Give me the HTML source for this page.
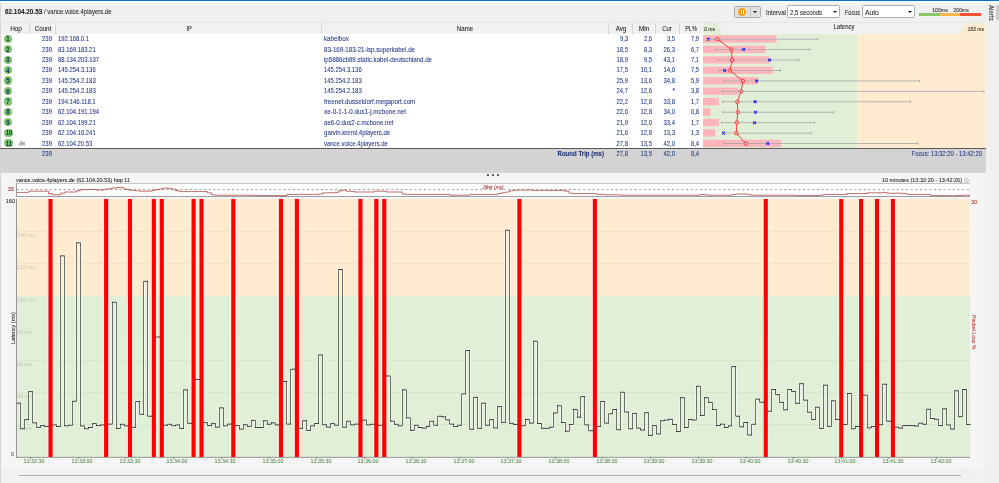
<!DOCTYPE html>
<html><head><meta charset="utf-8"><title>PingPlotter</title>
<style>
html,body{margin:0;padding:0;}
body{width:999px;height:483px;overflow:hidden;position:relative;background:#f0f0f0;font-family:"Liberation Sans",sans-serif;font-size:6px;color:#222;-webkit-text-size-adjust:none;text-size-adjust:none;}
div{position:absolute;white-space:nowrap;box-sizing:border-box;-webkit-text-stroke:0.07px currentColor;}
svg{position:absolute;left:0;top:0;}
.hop{left:3.6px;height:8.2px;border-radius:4.1px;background:#7cc468;}
.dd{background:#fff;border:0.6px solid #adadad;border-radius:1.6px;height:13px;top:5.4px;}
#all{left:0;top:0;width:999px;height:483px;will-change:transform;}
</style></head><body><div id="all">
<!-- window top -->
<div style="left:0;top:0;width:999px;height:1.4px;background:#0b6fd0"></div>
<div style="left:0;top:1.4px;width:999px;height:1.4px;background:#fafafa"></div>
<div style="left:0;top:3px;width:0.9px;height:480px;background:#d6d6d6"></div>
<!-- toolbar -->
<div style="top:7px;height:10.0px;line-height:10.0px;font-size:7.166px;color:#222;font-weight:bold;left:4.80px;transform-origin:0 50%;transform:translateY(0.15px) scaleX(0.8915);">62.104.20.53</div>
<div style="top:7px;height:10.0px;line-height:10.0px;font-size:7.166px;color:#222;left:44.10px;transform-origin:0 50%;transform:translateY(0.15px) scaleX(0.8360);">/ vance.voice.4players.de</div>
<div style="left:733.6px;top:5.6px;width:27.8px;height:12.8px;background:#e1e1e1;border:0.6px solid #adadad;border-radius:1.6px"></div>
<div style="left:750.2px;top:6.2px;width:0.6px;height:11.6px;background:#c4c4c4"></div>
<div style="left:738.3px;top:8.2px;width:7.8px;height:7.8px;border-radius:50%;background:#f9a01b"></div>
<div style="left:740.7px;top:10.1px;width:1.1px;height:4px;background:#fff"></div>
<div style="left:742.6px;top:10.1px;width:1.1px;height:4px;background:#fff"></div>
<div style="left:753.40px;top:11.10px;width:0;height:0;border-left:2.2px solid transparent;border-right:2.2px solid transparent;border-top:2.4px solid #111"></div>
<div style="top:8px;height:10.0px;line-height:10.0px;font-size:6.890px;color:#222;left:766.00px;transform-origin:0 50%;transform:translateY(0.05px) scaleX(0.8807);">Interval</div>
<div class="dd" style="left:787.2px;width:53.2px"></div>
<div style="top:8px;height:10.0px;line-height:10.0px;font-size:6.890px;color:#222;left:789.80px;transform-origin:0 50%;transform:translateY(0.15px) scaleX(0.8639);">2,5 seconds</div>
<div style="left:833.40px;top:11.10px;width:0;height:0;border-left:2.2px solid transparent;border-right:2.2px solid transparent;border-top:2.4px solid #111"></div>
<div style="top:8px;height:10.0px;line-height:10.0px;font-size:6.890px;color:#222;left:845.10px;transform-origin:0 50%;transform:translateY(0.05px) scaleX(0.7995);">Focus</div>
<div class="dd" style="left:861.6px;width:53.2px"></div>
<div style="top:8px;height:10.0px;line-height:10.0px;font-size:6.890px;color:#222;left:864.60px;transform-origin:0 50%;transform:translateY(0.15px) scaleX(0.9790);">Auto</div>
<div style="left:908.30px;top:11.10px;width:0;height:0;border-left:2.2px solid transparent;border-right:2.2px solid transparent;border-top:2.4px solid #111"></div>
<div style="left:919px;top:12.9px;width:21px;height:3px;background:#8ac56c"></div>
<div style="left:940px;top:12.9px;width:20.4px;height:3px;background:#fbb748"></div>
<div style="left:960.4px;top:12.9px;width:20.6px;height:3px;background:#f4523c"></div>
<div style="top:4px;height:10.0px;line-height:10.0px;font-size:6.042px;color:#222;left:790.20px;width:300px;text-align:center;transform-origin:50% 50%;transform:translateY(0.95px) scaleX(0.8602);">100ms</div>
<div style="top:4px;height:10.0px;line-height:10.0px;font-size:6.042px;color:#222;left:810.80px;width:300px;text-align:center;transform-origin:50% 50%;transform:translateY(0.95px) scaleX(0.8602);">200ms</div>
<!-- alerts sidebar -->
<div style="left:985.5px;top:3px;width:13.5px;height:480px;background:#f0f0f0"></div>
<div style="left:995.5px;top:4.6px;width:3.5px;height:15.3px;background:#cdcdcd"></div>
<div style="left:995.1px;top:4.7px;transform-origin:0 0;transform:rotate(90deg) scaleX(.92);font-size:6.7px;line-height:8px;color:#333">Alerts</div>
<!-- header strip -->
<div style="left:0;top:21.6px;width:985.5px;height:1.6px;background:#e4e4e4"></div>
<div style="left:1.8px;top:23.2px;width:983.7px;height:10.4px;background:#f1f1f1"></div>
<div style="top:23px;height:10.0px;line-height:10.0px;font-size:6.614px;color:#222;left:-134.30px;width:300px;text-align:center;transform-origin:50% 50%;transform:translateY(0.75px) scaleX(0.9687);">Hop</div><div style="left:29.30px;top:23.2px;width:0.6px;height:10.4px;background:#d6d6d6"></div><div style="top:23px;height:10.0px;line-height:10.0px;font-size:6.614px;color:#222;left:-107.40px;width:300px;text-align:center;transform-origin:50% 50%;transform:translateY(0.75px) scaleX(0.9453);">Count</div><div style="left:55.30px;top:23.2px;width:0.6px;height:10.4px;background:#d6d6d6"></div><div style="top:23px;height:10.0px;line-height:10.0px;font-size:6.614px;color:#222;left:38.55px;width:300px;text-align:center;transform-origin:50% 50%;transform:translateY(0.75px) scaleX(0.8337);">IP</div><div style="left:321.20px;top:23.2px;width:0.6px;height:10.4px;background:#d6d6d6"></div><div style="top:23px;height:10.0px;line-height:10.0px;font-size:6.614px;color:#222;left:315.10px;width:300px;text-align:center;transform-origin:50% 50%;transform:translateY(0.75px) scaleX(0.9337);">Name</div><div style="left:608.40px;top:23.2px;width:0.6px;height:10.4px;background:#d6d6d6"></div><div style="top:23px;height:10.0px;line-height:10.0px;font-size:6.614px;color:#222;left:470.55px;width:300px;text-align:center;transform-origin:50% 50%;transform:translateY(0.75px) scaleX(0.9477);">Avg</div><div style="left:632.10px;top:23.2px;width:0.6px;height:10.4px;background:#d6d6d6"></div><div style="top:23px;height:10.0px;line-height:10.0px;font-size:6.614px;color:#222;left:494.00px;width:300px;text-align:center;transform-origin:50% 50%;transform:translateY(0.75px) scaleX(0.9982);">Min</div><div style="left:655.30px;top:23.2px;width:0.6px;height:10.4px;background:#d6d6d6"></div><div style="top:23px;height:10.0px;line-height:10.0px;font-size:6.614px;color:#222;left:517.40px;width:300px;text-align:center;transform-origin:50% 50%;transform:translateY(0.75px) scaleX(0.8970);">Cur</div><div style="left:678.90px;top:23.2px;width:0.6px;height:10.4px;background:#d6d6d6"></div><div style="top:23px;height:10.0px;line-height:10.0px;font-size:6.614px;color:#222;left:541.10px;width:300px;text-align:center;transform-origin:50% 50%;transform:translateY(0.75px) scaleX(0.8295);">PL%</div><div style="top:22px;height:10.0px;line-height:10.0px;font-size:6.614px;color:#222;left:694.30px;width:300px;text-align:center;transform-origin:50% 50%;transform:translateY(0.25px) scaleX(0.9023);">Latency</div>
<!-- table body -->
<div style="left:1.8px;top:33.6px;width:701.2px;height:114.6px;background:#fff"></div>
<div class="hop" style="top:34.70px;width:8.2px"></div><div style="top:34px;height:10.0px;line-height:10.0px;font-size:6.678px;color:#17345c;font-weight:bold;left:-142.30px;width:300px;text-align:center;transform-origin:50% 50%;transform:translateY(0.35px) scaleX(0.8885);">1</div><div style="top:34px;height:10.0px;line-height:10.0px;font-size:6.614px;color:#24388a;left:-248.00px;width:300px;text-align:right;transform-origin:100% 50%;transform:translateY(0.15px) scaleX(0.9144);">239</div><div style="top:34px;height:10.0px;line-height:10.0px;font-size:6.614px;color:#24388a;left:58.00px;transform-origin:0 50%;transform:translateY(0.15px) scaleX(0.8863);">192.168.0.1</div><div style="top:34px;height:10.0px;line-height:10.0px;font-size:6.614px;color:#24388a;left:324.20px;transform-origin:0 50%;transform:translateY(0.15px) scaleX(0.9407);">kabelbox</div><div style="top:34px;height:10.0px;line-height:10.0px;font-size:6.614px;color:#24388a;left:328.40px;width:300px;text-align:right;transform-origin:100% 50%;transform:translateY(0.15px) scaleX(0.8788);">9,3</div><div style="top:34px;height:10.0px;line-height:10.0px;font-size:6.614px;color:#24388a;left:351.90px;width:300px;text-align:right;transform-origin:100% 50%;transform:translateY(0.15px) scaleX(0.8788);">2,6</div><div style="top:34px;height:10.0px;line-height:10.0px;font-size:6.614px;color:#24388a;left:375.00px;width:300px;text-align:right;transform-origin:100% 50%;transform:translateY(0.15px) scaleX(0.8788);">3,5</div><div style="top:34px;height:10.0px;line-height:10.0px;font-size:6.614px;color:#24388a;left:398.50px;width:300px;text-align:right;transform-origin:100% 50%;transform:translateY(0.15px) scaleX(0.8788);">7,9</div><div class="hop" style="top:45.14px;width:8.2px"></div><div style="top:44px;height:10.0px;line-height:10.0px;font-size:6.678px;color:#17345c;font-weight:bold;left:-142.30px;width:300px;text-align:center;transform-origin:50% 50%;transform:translateY(0.79px) scaleX(0.8885);">2</div><div style="top:44px;height:10.0px;line-height:10.0px;font-size:6.614px;color:#24388a;left:-248.00px;width:300px;text-align:right;transform-origin:100% 50%;transform:translateY(0.59px) scaleX(0.9144);">239</div><div style="top:44px;height:10.0px;line-height:10.0px;font-size:6.614px;color:#24388a;left:58.00px;transform-origin:0 50%;transform:translateY(0.59px) scaleX(0.8912);">83.169.183.21</div><div style="top:44px;height:10.0px;line-height:10.0px;font-size:6.614px;color:#24388a;left:324.20px;transform-origin:0 50%;transform:translateY(0.59px) scaleX(0.9347);">83-169-183-21-isp.superkabel.de</div><div style="top:44px;height:10.0px;line-height:10.0px;font-size:6.614px;color:#24388a;left:328.40px;width:300px;text-align:right;transform-origin:100% 50%;transform:translateY(0.59px) scaleX(0.8889);">18,5</div><div style="top:44px;height:10.0px;line-height:10.0px;font-size:6.614px;color:#24388a;left:351.90px;width:300px;text-align:right;transform-origin:100% 50%;transform:translateY(0.59px) scaleX(0.8788);">8,3</div><div style="top:44px;height:10.0px;line-height:10.0px;font-size:6.614px;color:#24388a;left:375.00px;width:300px;text-align:right;transform-origin:100% 50%;transform:translateY(0.59px) scaleX(0.8889);">26,3</div><div style="top:44px;height:10.0px;line-height:10.0px;font-size:6.614px;color:#24388a;left:398.50px;width:300px;text-align:right;transform-origin:100% 50%;transform:translateY(0.59px) scaleX(0.8788);">6,7</div><div class="hop" style="top:55.58px;width:8.2px"></div><div style="top:55px;height:10.0px;line-height:10.0px;font-size:6.678px;color:#17345c;font-weight:bold;left:-142.30px;width:300px;text-align:center;transform-origin:50% 50%;transform:translateY(0.23px) scaleX(0.8885);">3</div><div style="top:55px;height:10.0px;line-height:10.0px;font-size:6.614px;color:#24388a;left:-248.00px;width:300px;text-align:right;transform-origin:100% 50%;transform:translateY(0.03px) scaleX(0.9144);">239</div><div style="top:55px;height:10.0px;line-height:10.0px;font-size:6.614px;color:#24388a;left:58.00px;transform-origin:0 50%;transform:translateY(0.03px) scaleX(0.8930);">88.134.203.137</div><div style="top:55px;height:10.0px;line-height:10.0px;font-size:6.614px;color:#24388a;left:324.20px;transform-origin:0 50%;transform:translateY(0.03px) scaleX(0.9302);">ip5886cb89.static.kabel-deutschland.de</div><div style="top:55px;height:10.0px;line-height:10.0px;font-size:6.614px;color:#24388a;left:328.40px;width:300px;text-align:right;transform-origin:100% 50%;transform:translateY(0.03px) scaleX(0.8889);">18,9</div><div style="top:55px;height:10.0px;line-height:10.0px;font-size:6.614px;color:#24388a;left:351.90px;width:300px;text-align:right;transform-origin:100% 50%;transform:translateY(0.03px) scaleX(0.8788);">9,5</div><div style="top:55px;height:10.0px;line-height:10.0px;font-size:6.614px;color:#24388a;left:375.00px;width:300px;text-align:right;transform-origin:100% 50%;transform:translateY(0.03px) scaleX(0.8889);">43,1</div><div style="top:55px;height:10.0px;line-height:10.0px;font-size:6.614px;color:#24388a;left:398.50px;width:300px;text-align:right;transform-origin:100% 50%;transform:translateY(0.03px) scaleX(0.8788);">7,1</div><div class="hop" style="top:66.02px;width:8.2px"></div><div style="top:65px;height:10.0px;line-height:10.0px;font-size:6.678px;color:#17345c;font-weight:bold;left:-142.30px;width:300px;text-align:center;transform-origin:50% 50%;transform:translateY(0.67px) scaleX(0.8885);">4</div><div style="top:65px;height:10.0px;line-height:10.0px;font-size:6.614px;color:#24388a;left:-248.00px;width:300px;text-align:right;transform-origin:100% 50%;transform:translateY(0.47px) scaleX(0.9144);">239</div><div style="top:65px;height:10.0px;line-height:10.0px;font-size:6.614px;color:#24388a;left:58.00px;transform-origin:0 50%;transform:translateY(0.47px) scaleX(0.8912);">145.254.3.136</div><div style="top:65px;height:10.0px;line-height:10.0px;font-size:6.614px;color:#24388a;left:324.20px;transform-origin:0 50%;transform:translateY(0.47px) scaleX(0.8912);">145.254.3.136</div><div style="top:65px;height:10.0px;line-height:10.0px;font-size:6.614px;color:#24388a;left:328.40px;width:300px;text-align:right;transform-origin:100% 50%;transform:translateY(0.47px) scaleX(0.8889);">17,5</div><div style="top:65px;height:10.0px;line-height:10.0px;font-size:6.614px;color:#24388a;left:351.90px;width:300px;text-align:right;transform-origin:100% 50%;transform:translateY(0.47px) scaleX(0.8889);">10,1</div><div style="top:65px;height:10.0px;line-height:10.0px;font-size:6.614px;color:#24388a;left:375.00px;width:300px;text-align:right;transform-origin:100% 50%;transform:translateY(0.47px) scaleX(0.8889);">14,0</div><div style="top:65px;height:10.0px;line-height:10.0px;font-size:6.614px;color:#24388a;left:398.50px;width:300px;text-align:right;transform-origin:100% 50%;transform:translateY(0.47px) scaleX(0.8788);">7,5</div><div class="hop" style="top:76.46px;width:8.2px"></div><div style="top:76px;height:10.0px;line-height:10.0px;font-size:6.678px;color:#17345c;font-weight:bold;left:-142.30px;width:300px;text-align:center;transform-origin:50% 50%;transform:translateY(0.11px) scaleX(0.8885);">5</div><div style="top:75px;height:10.0px;line-height:10.0px;font-size:6.614px;color:#24388a;left:-248.00px;width:300px;text-align:right;transform-origin:100% 50%;transform:translateY(0.91px) scaleX(0.9144);">239</div><div style="top:75px;height:10.0px;line-height:10.0px;font-size:6.614px;color:#24388a;left:58.00px;transform-origin:0 50%;transform:translateY(0.91px) scaleX(0.8912);">145.254.2.183</div><div style="top:75px;height:10.0px;line-height:10.0px;font-size:6.614px;color:#24388a;left:324.20px;transform-origin:0 50%;transform:translateY(0.91px) scaleX(0.8912);">145.254.2.183</div><div style="top:75px;height:10.0px;line-height:10.0px;font-size:6.614px;color:#24388a;left:328.40px;width:300px;text-align:right;transform-origin:100% 50%;transform:translateY(0.91px) scaleX(0.8889);">25,9</div><div style="top:75px;height:10.0px;line-height:10.0px;font-size:6.614px;color:#24388a;left:351.90px;width:300px;text-align:right;transform-origin:100% 50%;transform:translateY(0.91px) scaleX(0.8889);">13,6</div><div style="top:75px;height:10.0px;line-height:10.0px;font-size:6.614px;color:#24388a;left:375.00px;width:300px;text-align:right;transform-origin:100% 50%;transform:translateY(0.91px) scaleX(0.8889);">34,8</div><div style="top:75px;height:10.0px;line-height:10.0px;font-size:6.614px;color:#24388a;left:398.50px;width:300px;text-align:right;transform-origin:100% 50%;transform:translateY(0.91px) scaleX(0.8788);">5,9</div><div class="hop" style="top:86.90px;width:8.2px"></div><div style="top:86px;height:10.0px;line-height:10.0px;font-size:6.678px;color:#17345c;font-weight:bold;left:-142.30px;width:300px;text-align:center;transform-origin:50% 50%;transform:translateY(0.55px) scaleX(0.8885);">6</div><div style="top:86px;height:10.0px;line-height:10.0px;font-size:6.614px;color:#24388a;left:-248.00px;width:300px;text-align:right;transform-origin:100% 50%;transform:translateY(0.35px) scaleX(0.9144);">239</div><div style="top:86px;height:10.0px;line-height:10.0px;font-size:6.614px;color:#24388a;left:58.00px;transform-origin:0 50%;transform:translateY(0.35px) scaleX(0.8912);">145.254.2.183</div><div style="top:86px;height:10.0px;line-height:10.0px;font-size:6.614px;color:#24388a;left:324.20px;transform-origin:0 50%;transform:translateY(0.35px) scaleX(0.8912);">145.254.2.183</div><div style="top:86px;height:10.0px;line-height:10.0px;font-size:6.614px;color:#24388a;left:328.40px;width:300px;text-align:right;transform-origin:100% 50%;transform:translateY(0.35px) scaleX(0.8889);">24,7</div><div style="top:86px;height:10.0px;line-height:10.0px;font-size:6.614px;color:#24388a;left:351.90px;width:300px;text-align:right;transform-origin:100% 50%;transform:translateY(0.35px) scaleX(0.8889);">12,6</div><div style="top:86px;height:10.0px;line-height:10.0px;font-size:6.614px;color:#24388a;left:375.00px;width:300px;text-align:right;transform-origin:100% 50%;transform:translateY(0.35px) scaleX(1.0109);">*</div><div style="top:86px;height:10.0px;line-height:10.0px;font-size:6.614px;color:#24388a;left:398.50px;width:300px;text-align:right;transform-origin:100% 50%;transform:translateY(0.35px) scaleX(0.8788);">3,8</div><div class="hop" style="top:97.34px;width:8.2px"></div><div style="top:96px;height:10.0px;line-height:10.0px;font-size:6.678px;color:#17345c;font-weight:bold;left:-142.30px;width:300px;text-align:center;transform-origin:50% 50%;transform:translateY(0.99px) scaleX(0.8885);">7</div><div style="top:96px;height:10.0px;line-height:10.0px;font-size:6.614px;color:#24388a;left:-248.00px;width:300px;text-align:right;transform-origin:100% 50%;transform:translateY(0.79px) scaleX(0.9144);">239</div><div style="top:96px;height:10.0px;line-height:10.0px;font-size:6.614px;color:#24388a;left:58.00px;transform-origin:0 50%;transform:translateY(0.79px) scaleX(0.9016);">194.146.118.1</div><div style="top:96px;height:10.0px;line-height:10.0px;font-size:6.614px;color:#24388a;left:324.20px;transform-origin:0 50%;transform:translateY(0.79px) scaleX(0.9410);">freenet.dusseldorf.megaport.com</div><div style="top:96px;height:10.0px;line-height:10.0px;font-size:6.614px;color:#24388a;left:328.40px;width:300px;text-align:right;transform-origin:100% 50%;transform:translateY(0.79px) scaleX(0.8889);">22,2</div><div style="top:96px;height:10.0px;line-height:10.0px;font-size:6.614px;color:#24388a;left:351.90px;width:300px;text-align:right;transform-origin:100% 50%;transform:translateY(0.79px) scaleX(0.8889);">12,8</div><div style="top:96px;height:10.0px;line-height:10.0px;font-size:6.614px;color:#24388a;left:375.00px;width:300px;text-align:right;transform-origin:100% 50%;transform:translateY(0.79px) scaleX(0.8889);">33,8</div><div style="top:96px;height:10.0px;line-height:10.0px;font-size:6.614px;color:#24388a;left:398.50px;width:300px;text-align:right;transform-origin:100% 50%;transform:translateY(0.79px) scaleX(0.8788);">1,7</div><div class="hop" style="top:107.78px;width:8.2px"></div><div style="top:107px;height:10.0px;line-height:10.0px;font-size:6.678px;color:#17345c;font-weight:bold;left:-142.30px;width:300px;text-align:center;transform-origin:50% 50%;transform:translateY(0.43px) scaleX(0.8885);">8</div><div style="top:107px;height:10.0px;line-height:10.0px;font-size:6.614px;color:#24388a;left:-248.00px;width:300px;text-align:right;transform-origin:100% 50%;transform:translateY(0.23px) scaleX(0.9144);">239</div><div style="top:107px;height:10.0px;line-height:10.0px;font-size:6.614px;color:#24388a;left:58.00px;transform-origin:0 50%;transform:translateY(0.23px) scaleX(0.8930);">62.104.191.194</div><div style="top:107px;height:10.0px;line-height:10.0px;font-size:6.614px;color:#24388a;left:324.20px;transform-origin:0 50%;transform:translateY(0.23px) scaleX(0.9463);">xe-0-1-1-0.dus1-j.mcbone.net</div><div style="top:107px;height:10.0px;line-height:10.0px;font-size:6.614px;color:#24388a;left:328.40px;width:300px;text-align:right;transform-origin:100% 50%;transform:translateY(0.23px) scaleX(0.8889);">22,6</div><div style="top:107px;height:10.0px;line-height:10.0px;font-size:6.614px;color:#24388a;left:351.90px;width:300px;text-align:right;transform-origin:100% 50%;transform:translateY(0.23px) scaleX(0.8889);">12,8</div><div style="top:107px;height:10.0px;line-height:10.0px;font-size:6.614px;color:#24388a;left:375.00px;width:300px;text-align:right;transform-origin:100% 50%;transform:translateY(0.23px) scaleX(0.8889);">34,0</div><div style="top:107px;height:10.0px;line-height:10.0px;font-size:6.614px;color:#24388a;left:398.50px;width:300px;text-align:right;transform-origin:100% 50%;transform:translateY(0.23px) scaleX(0.8788);">0,8</div><div class="hop" style="top:118.22px;width:8.2px"></div><div style="top:117px;height:10.0px;line-height:10.0px;font-size:6.678px;color:#17345c;font-weight:bold;left:-142.30px;width:300px;text-align:center;transform-origin:50% 50%;transform:translateY(0.87px) scaleX(0.8885);">9</div><div style="top:117px;height:10.0px;line-height:10.0px;font-size:6.614px;color:#24388a;left:-248.00px;width:300px;text-align:right;transform-origin:100% 50%;transform:translateY(0.67px) scaleX(0.9144);">239</div><div style="top:117px;height:10.0px;line-height:10.0px;font-size:6.614px;color:#24388a;left:58.00px;transform-origin:0 50%;transform:translateY(0.67px) scaleX(0.8912);">62.104.199.21</div><div style="top:117px;height:10.0px;line-height:10.0px;font-size:6.614px;color:#24388a;left:324.20px;transform-origin:0 50%;transform:translateY(0.67px) scaleX(0.9275);">ae6-0.dus2-c.mcbone.net</div><div style="top:117px;height:10.0px;line-height:10.0px;font-size:6.614px;color:#24388a;left:328.40px;width:300px;text-align:right;transform-origin:100% 50%;transform:translateY(0.67px) scaleX(0.8889);">21,9</div><div style="top:117px;height:10.0px;line-height:10.0px;font-size:6.614px;color:#24388a;left:351.90px;width:300px;text-align:right;transform-origin:100% 50%;transform:translateY(0.67px) scaleX(0.8889);">12,0</div><div style="top:117px;height:10.0px;line-height:10.0px;font-size:6.614px;color:#24388a;left:375.00px;width:300px;text-align:right;transform-origin:100% 50%;transform:translateY(0.67px) scaleX(0.8889);">33,4</div><div style="top:117px;height:10.0px;line-height:10.0px;font-size:6.614px;color:#24388a;left:398.50px;width:300px;text-align:right;transform-origin:100% 50%;transform:translateY(0.67px) scaleX(0.8788);">1,7</div><div class="hop" style="top:128.66px;width:9.9px"></div><div style="top:128px;height:10.0px;line-height:10.0px;font-size:6.678px;color:#17345c;font-weight:bold;left:-141.45px;width:300px;text-align:center;transform-origin:50% 50%;transform:translateY(0.31px) scaleX(0.8616);">10</div><div style="top:128px;height:10.0px;line-height:10.0px;font-size:6.614px;color:#24388a;left:-248.00px;width:300px;text-align:right;transform-origin:100% 50%;transform:translateY(0.11px) scaleX(0.9144);">239</div><div style="top:128px;height:10.0px;line-height:10.0px;font-size:6.614px;color:#24388a;left:58.00px;transform-origin:0 50%;transform:translateY(0.11px) scaleX(0.8912);">62.104.16.241</div><div style="top:128px;height:10.0px;line-height:10.0px;font-size:6.614px;color:#24388a;left:324.20px;transform-origin:0 50%;transform:translateY(0.11px) scaleX(0.9197);">garvin.kreml.4players.de</div><div style="top:128px;height:10.0px;line-height:10.0px;font-size:6.614px;color:#24388a;left:328.40px;width:300px;text-align:right;transform-origin:100% 50%;transform:translateY(0.11px) scaleX(0.8889);">21,6</div><div style="top:128px;height:10.0px;line-height:10.0px;font-size:6.614px;color:#24388a;left:351.90px;width:300px;text-align:right;transform-origin:100% 50%;transform:translateY(0.11px) scaleX(0.8889);">12,8</div><div style="top:128px;height:10.0px;line-height:10.0px;font-size:6.614px;color:#24388a;left:375.00px;width:300px;text-align:right;transform-origin:100% 50%;transform:translateY(0.11px) scaleX(0.8889);">13,3</div><div style="top:128px;height:10.0px;line-height:10.0px;font-size:6.614px;color:#24388a;left:398.50px;width:300px;text-align:right;transform-origin:100% 50%;transform:translateY(0.11px) scaleX(0.8788);">1,3</div><div class="hop" style="top:139.10px;width:9.9px"></div><div style="top:138px;height:10.0px;line-height:10.0px;font-size:6.678px;color:#17345c;font-weight:bold;left:-141.45px;width:300px;text-align:center;transform-origin:50% 50%;transform:translateY(0.75px) scaleX(0.9065);">11</div><div style="top:138px;height:10.0px;line-height:10.0px;font-size:6.614px;color:#24388a;left:-248.00px;width:300px;text-align:right;transform-origin:100% 50%;transform:translateY(0.55px) scaleX(0.9144);">239</div><div style="top:138px;height:10.0px;line-height:10.0px;font-size:6.614px;color:#24388a;left:58.00px;transform-origin:0 50%;transform:translateY(0.55px) scaleX(0.8889);">62.104.20.53</div><div style="top:138px;height:10.0px;line-height:10.0px;font-size:6.614px;color:#24388a;left:324.20px;transform-origin:0 50%;transform:translateY(0.55px) scaleX(0.9010);">vance.voice.4players.de</div><div style="top:138px;height:10.0px;line-height:10.0px;font-size:6.614px;color:#24388a;left:328.40px;width:300px;text-align:right;transform-origin:100% 50%;transform:translateY(0.55px) scaleX(0.8889);">27,8</div><div style="top:138px;height:10.0px;line-height:10.0px;font-size:6.614px;color:#24388a;left:351.90px;width:300px;text-align:right;transform-origin:100% 50%;transform:translateY(0.55px) scaleX(0.8889);">13,5</div><div style="top:138px;height:10.0px;line-height:10.0px;font-size:6.614px;color:#24388a;left:375.00px;width:300px;text-align:right;transform-origin:100% 50%;transform:translateY(0.55px) scaleX(0.8889);">42,0</div><div style="top:138px;height:10.0px;line-height:10.0px;font-size:6.614px;color:#24388a;left:398.50px;width:300px;text-align:right;transform-origin:100% 50%;transform:translateY(0.55px) scaleX(0.8788);">8,4</div>
<!-- latency area -->
<div style="left:703px;top:33.6px;width:154.4px;height:114.6px;background:#e0efd6"></div>
<div style="left:857.4px;top:33.6px;width:128.1px;height:114.6px;background:#ffebd0"></div>
<svg width="999" height="483" viewBox="0 0 999 483">
<polygon points="703,23.2 717.6,23.2 723,33.7 703,33.7" fill="#e0efd6"/>
<polygon points="966,23.2 985.5,23.2 985.5,33.7 959,33.7" fill="#ffebd0"/>
<rect x="703.0" y="35.35" width="73.47" height="7.3" fill="#ffb4bc"/><path d="M707.01,39.15H818.00M707.01,37.80v2.7M818.00,37.80v2.7" stroke="#fff" stroke-width="1.7" fill="none" opacity="0.35"/><path d="M707.01,39.15H818.00M707.01,37.80v2.7M818.00,37.80v2.7" stroke="#858585" stroke-width="0.62" fill="none"/><path d="M707.00,37.75l2.8,2.8M707.00,40.55l2.8,-2.8" stroke="#2020f0" stroke-width="1.05" fill="none"/><rect x="703.0" y="45.79" width="62.31" height="7.3" fill="#ffb4bc"/><path d="M715.81,49.59H810.00M715.81,48.24v2.7M810.00,48.24v2.7" stroke="#fff" stroke-width="1.7" fill="none" opacity="0.35"/><path d="M715.81,49.59H810.00M715.81,48.24v2.7M810.00,48.24v2.7" stroke="#858585" stroke-width="0.62" fill="none"/><path d="M742.20,48.19l2.8,2.8M742.20,50.99l2.8,-2.8" stroke="#2020f0" stroke-width="1.05" fill="none"/><rect x="703.0" y="56.23" width="66.03" height="7.3" fill="#ffb4bc"/><path d="M717.67,60.03H799.00M717.67,58.68v2.7M799.00,58.68v2.7" stroke="#fff" stroke-width="1.7" fill="none" opacity="0.35"/><path d="M717.67,60.03H799.00M717.67,58.68v2.7M799.00,58.68v2.7" stroke="#858585" stroke-width="0.62" fill="none"/><path d="M768.13,58.63l2.8,2.8M768.13,61.43l2.8,-2.8" stroke="#2020f0" stroke-width="1.05" fill="none"/><rect x="703.0" y="66.67" width="69.75" height="7.3" fill="#ffb4bc"/><path d="M718.59,70.47H780.50M718.59,69.12v2.7M780.50,69.12v2.7" stroke="#fff" stroke-width="1.7" fill="none" opacity="0.35"/><path d="M718.59,70.47H780.50M718.59,69.12v2.7M780.50,69.12v2.7" stroke="#858585" stroke-width="0.62" fill="none"/><path d="M723.21,69.07l2.8,2.8M723.21,71.87l2.8,-2.8" stroke="#2020f0" stroke-width="1.05" fill="none"/><rect x="703.0" y="77.11" width="54.87" height="7.3" fill="#ffb4bc"/><path d="M723.99,80.91H919.50M723.99,79.56v2.7M919.50,79.56v2.7" stroke="#fff" stroke-width="1.7" fill="none" opacity="0.35"/><path d="M723.99,80.91H919.50M723.99,79.56v2.7M919.50,79.56v2.7" stroke="#858585" stroke-width="0.62" fill="none"/><path d="M755.32,79.51l2.8,2.8M755.32,82.31l2.8,-2.8" stroke="#2020f0" stroke-width="1.05" fill="none"/><rect x="703.0" y="87.55" width="35.34" height="7.3" fill="#ffb4bc"/><path d="M722.45,91.35H984.00M722.45,90.00v2.7M984.00,90.00v2.7" stroke="#fff" stroke-width="1.7" fill="none" opacity="0.35"/><path d="M722.45,91.35H984.00M722.45,90.00v2.7M984.00,90.00v2.7" stroke="#858585" stroke-width="0.62" fill="none"/><rect x="703.0" y="97.99" width="15.81" height="7.3" fill="#ffb4bc"/><path d="M722.76,101.79H910.40M722.76,100.44v2.7M910.40,100.44v2.7" stroke="#fff" stroke-width="1.7" fill="none" opacity="0.35"/><path d="M722.76,101.79H910.40M722.76,100.44v2.7M910.40,100.44v2.7" stroke="#858585" stroke-width="0.62" fill="none"/><path d="M753.78,100.39l2.8,2.8M753.78,103.19l2.8,-2.8" stroke="#2020f0" stroke-width="1.05" fill="none"/><rect x="703.0" y="108.43" width="7.44" height="7.3" fill="#ffb4bc"/><path d="M722.76,112.23H833.60M722.76,110.88v2.7M833.60,110.88v2.7" stroke="#fff" stroke-width="1.7" fill="none" opacity="0.35"/><path d="M722.76,112.23H833.60M722.76,110.88v2.7M833.60,110.88v2.7" stroke="#858585" stroke-width="0.62" fill="none"/><path d="M754.09,110.83l2.8,2.8M754.09,113.63l2.8,-2.8" stroke="#2020f0" stroke-width="1.05" fill="none"/><rect x="703.0" y="118.87" width="15.81" height="7.3" fill="#ffb4bc"/><path d="M721.52,122.67H814.50M721.52,121.32v2.7M814.50,121.32v2.7" stroke="#fff" stroke-width="1.7" fill="none" opacity="0.35"/><path d="M721.52,122.67H814.50M721.52,121.32v2.7M814.50,121.32v2.7" stroke="#858585" stroke-width="0.62" fill="none"/><path d="M753.16,121.27l2.8,2.8M753.16,124.07l2.8,-2.8" stroke="#2020f0" stroke-width="1.05" fill="none"/><rect x="703.0" y="129.31" width="12.09" height="7.3" fill="#ffb4bc"/><path d="M722.76,133.11H811.00M722.76,131.76v2.7M811.00,131.76v2.7" stroke="#fff" stroke-width="1.7" fill="none" opacity="0.35"/><path d="M722.76,133.11H811.00M722.76,131.76v2.7M811.00,131.76v2.7" stroke="#858585" stroke-width="0.62" fill="none"/><path d="M722.13,131.71l2.8,2.8M722.13,134.51l2.8,-2.8" stroke="#2020f0" stroke-width="1.05" fill="none"/><rect x="703.0" y="139.75" width="78.12" height="7.3" fill="#ffb4bc"/><path d="M723.84,143.55H918.00M723.84,142.20v2.7M918.00,142.20v2.7" stroke="#fff" stroke-width="1.7" fill="none" opacity="0.35"/><path d="M723.84,143.55H918.00M723.84,142.20v2.7M918.00,142.20v2.7" stroke="#858585" stroke-width="0.62" fill="none"/><path d="M766.44,142.15l2.8,2.8M766.44,144.95l2.8,-2.8" stroke="#2020f0" stroke-width="1.05" fill="none"/><path d="M717.36,39.15 L731.56,49.59 L732.18,60.03 L730.01,70.47 L742.98,80.91 L741.13,91.35 L737.27,101.79 L737.89,112.23 L736.81,122.67 L736.34,133.11 L745.91,143.55" stroke="#f03030" stroke-width="0.9" fill="none"/><circle cx="717.36" cy="39.15" r="1.75" fill="#ffd0d0" fill-opacity="0.45" stroke="#f03030" stroke-width="0.85"/><circle cx="731.56" cy="49.59" r="1.75" fill="#ffd0d0" fill-opacity="0.45" stroke="#f03030" stroke-width="0.85"/><circle cx="732.18" cy="60.03" r="1.75" fill="#ffd0d0" fill-opacity="0.45" stroke="#f03030" stroke-width="0.85"/><circle cx="730.01" cy="70.47" r="1.75" fill="#ffd0d0" fill-opacity="0.45" stroke="#f03030" stroke-width="0.85"/><circle cx="742.98" cy="80.91" r="1.75" fill="#ffd0d0" fill-opacity="0.45" stroke="#f03030" stroke-width="0.85"/><circle cx="741.13" cy="91.35" r="1.75" fill="#ffd0d0" fill-opacity="0.45" stroke="#f03030" stroke-width="0.85"/><circle cx="737.27" cy="101.79" r="1.75" fill="#ffd0d0" fill-opacity="0.45" stroke="#f03030" stroke-width="0.85"/><circle cx="737.89" cy="112.23" r="1.75" fill="#ffd0d0" fill-opacity="0.45" stroke="#f03030" stroke-width="0.85"/><circle cx="736.81" cy="122.67" r="1.75" fill="#ffd0d0" fill-opacity="0.45" stroke="#f03030" stroke-width="0.85"/><circle cx="736.34" cy="133.11" r="1.75" fill="#ffd0d0" fill-opacity="0.45" stroke="#f03030" stroke-width="0.85"/><circle cx="745.91" cy="143.55" r="1.75" fill="#ffd0d0" fill-opacity="0.45" stroke="#f03030" stroke-width="0.85"/>
<g fill="#666"><rect x="18.8" y="143.1" width="0.8" height="2.4"/><rect x="20.7" y="140.7" width="0.8" height="4.8"/><rect x="22.4" y="141.9" width="0.8" height="3.6"/><rect x="23.7" y="142.3" width="0.8" height="3.2"/></g>
</svg>
<div style="top:23px;height:10.0px;line-height:10.0px;font-size:6.042px;color:#222;font-style:italic;left:704.40px;transform-origin:0 50%;transform:translateY(0.95px) scaleX(0.8401);">0 ms</div>
<div style="top:23px;height:10.0px;line-height:10.0px;font-size:6.042px;color:#222;font-style:italic;left:683.80px;width:300px;text-align:right;transform-origin:100% 50%;transform:translateY(0.95px) scaleX(0.8378);">183 ms</div>
<!-- summary band -->
<div style="left:0;top:148px;width:985.5px;height:0.8px;background:#5a5a5a"></div>
<div style="left:0;top:148.8px;width:985.5px;height:23.9px;background:#d3d3d3"></div>
<div style="top:148px;height:10.0px;line-height:10.0px;font-size:6.614px;color:#24388a;left:-248.00px;width:300px;text-align:right;transform-origin:100% 50%;transform:translateY(0.55px) scaleX(0.9144);">239</div>
<div style="top:148px;height:10.0px;line-height:10.0px;font-size:6.614px;color:#1d2f7a;font-weight:bold;left:304.00px;width:300px;text-align:right;transform-origin:100% 50%;transform:translateY(0.55px) scaleX(0.9170);">Round Trip (ms)</div>
<div style="top:148px;height:10.0px;line-height:10.0px;font-size:6.614px;color:#24388a;left:328.40px;width:300px;text-align:right;transform-origin:100% 50%;transform:translateY(0.55px) scaleX(0.8889);">27,8</div>
<div style="top:148px;height:10.0px;line-height:10.0px;font-size:6.614px;color:#24388a;left:351.90px;width:300px;text-align:right;transform-origin:100% 50%;transform:translateY(0.55px) scaleX(0.8889);">13,5</div>
<div style="top:148px;height:10.0px;line-height:10.0px;font-size:6.614px;color:#24388a;left:375.00px;width:300px;text-align:right;transform-origin:100% 50%;transform:translateY(0.55px) scaleX(0.8889);">42,0</div>
<div style="top:148px;height:10.0px;line-height:10.0px;font-size:6.614px;color:#24388a;left:398.50px;width:300px;text-align:right;transform-origin:100% 50%;transform:translateY(0.55px) scaleX(0.8788);">8,4</div>
<div style="top:148px;height:10.0px;line-height:10.0px;font-size:6.614px;color:#24388a;left:681.50px;width:300px;text-align:right;transform-origin:100% 50%;transform:translateY(0.55px) scaleX(0.8919);">Focus: 13:32:20 - 13:42:20</div>
<!-- graph panel -->
<div style="left:1.8px;top:172.7px;width:983.7px;height:310.3px;background:#f5f5f5"></div>
<div style="left:1.8px;top:468px;width:983.7px;height:15px;background:#f1f1f1"></div>
<div style="left:487px;top:174.1px;width:2px;height:2px;border-radius:0.6px;background:#555"></div>
<div style="left:491.9px;top:174.1px;width:2px;height:2px;border-radius:0.6px;background:#555"></div>
<div style="left:497px;top:174.1px;width:2px;height:2px;border-radius:0.6px;background:#555"></div>
<div style="left:16.2px;top:183.3px;width:953.8px;height:13.6px;background:#fff;border:0.6px solid #a0a0a0;border-top:0.8px solid #c4c4c4;border-right:none"></div>
<div style="top:175px;height:10.0px;line-height:10.0px;font-size:6.063px;color:#222;left:16.20px;transform-origin:0 50%;transform:translateY(0.05px) scaleX(0.9079);">vance.voice.4players.de (62.104.20.53) hop 11</div>
<div style="top:175px;height:10.0px;line-height:10.0px;font-size:6.063px;color:#222;left:662.00px;width:300px;text-align:right;transform-origin:100% 50%;transform:translateY(0.05px) scaleX(0.9123);">10 minutes (13:32:20 - 13:42:20)</div>
<div style="left:964.4px;top:178.2px;width:5px;height:5px;border-radius:50%;background:#e4e4e4;border:0.5px solid #c8c8c8"></div>
<div style="top:184px;height:10.0px;line-height:10.0px;font-size:6.063px;color:#b22222;left:-285.80px;width:300px;text-align:right;transform-origin:100% 50%;transform:translateY(0.15px) scaleX(0.9144);">35</div>
<div style="top:195px;height:10.0px;line-height:10.0px;font-size:6.063px;color:#222;left:-285.50px;width:300px;text-align:right;transform-origin:100% 50%;transform:translateY(0.75px) scaleX(0.9144);">160</div>
<div style="top:449px;height:10.0px;line-height:10.0px;font-size:6.063px;color:#555;left:-285.60px;width:300px;text-align:right;transform-origin:100% 50%;transform:translateY(0.25px) scaleX(0.9144);">0</div>
<div style="top:197px;height:10.0px;line-height:10.0px;font-size:6.063px;color:#c03030;left:971.00px;transform-origin:0 50%;transform:translateY(0.35px) scaleX(0.9144);">30</div>
<div style="left:16.5px;top:199.0px;width:953.5px;height:96.80px;background:#ffebd0"></div>
<div style="left:16.5px;top:295.80px;width:953.5px;height:161.20px;background:#e0efd6"></div>
<div style="top:230px;height:10.0px;line-height:10.0px;font-size:6.063px;color:#b4b4a4;left:17.20px;transform-origin:0 50%;transform:translateY(0.15px) scaleX(0.9136);opacity:.6;">140 ms</div><div style="top:262px;height:10.0px;line-height:10.0px;font-size:6.063px;color:#b4b4a4;left:17.20px;transform-origin:0 50%;transform:translateY(0.35px) scaleX(0.9136);opacity:.6;">120 ms</div><div style="top:294px;height:10.0px;line-height:10.0px;font-size:6.063px;color:#b4b4a4;left:17.20px;transform-origin:0 50%;transform:translateY(0.55px) scaleX(0.9136);opacity:.6;">100 ms</div><div style="top:326px;height:10.0px;line-height:10.0px;font-size:6.063px;color:#b4b4a4;left:17.20px;transform-origin:0 50%;transform:translateY(0.75px) scaleX(0.9134);opacity:.6;">80 ms</div><div style="top:358px;height:10.0px;line-height:10.0px;font-size:6.063px;color:#b4b4a4;left:17.20px;transform-origin:0 50%;transform:translateY(0.95px) scaleX(0.9134);opacity:.6;">60 ms</div><div style="top:391px;height:10.0px;line-height:10.0px;font-size:6.063px;color:#b4b4a4;left:17.20px;transform-origin:0 50%;transform:translateY(0.15px) scaleX(0.9134);opacity:.6;">40 ms</div><div style="top:423px;height:10.0px;line-height:10.0px;font-size:6.063px;color:#b4b4a4;left:17.20px;transform-origin:0 50%;transform:translateY(0.35px) scaleX(0.9134);opacity:.6;">20 ms</div>
<svg width="999" height="483" viewBox="0 0 999 483">
<rect x="16.5" y="231.15" width="953.5" height="0.5" fill="#000" opacity="0.07"/><rect x="16.5" y="263.35" width="953.5" height="0.5" fill="#000" opacity="0.07"/><rect x="16.5" y="327.75" width="953.5" height="0.5" fill="#000" opacity="0.07"/><rect x="16.5" y="359.95" width="953.5" height="0.5" fill="#000" opacity="0.07"/><rect x="16.5" y="392.15" width="953.5" height="0.5" fill="#000" opacity="0.07"/><rect x="16.5" y="424.35" width="953.5" height="0.5" fill="#000" opacity="0.07"/>
<path d="M16.75,189.6H970" stroke="#555" stroke-width="0.6" stroke-dasharray="2.1,2.58" fill="none"/>
<path d="M16.75,192.40 L20.72,192.40 L20.72,192.40 L24.70,192.40 L24.70,192.40 L28.67,192.40 L28.67,191.20 L32.64,191.20 L32.64,191.20 L36.62,191.20 L36.62,191.20 L40.59,191.20 L40.59,191.20 L44.56,191.20 L44.56,191.20 L48.54,191.20 L48.54,193.60 L52.51,193.60 L52.51,194.80 L56.48,194.80 L56.48,194.80 L60.46,194.80 L60.46,193.20 L64.43,193.20 L64.43,192.00 L68.41,192.00 L68.41,192.00 L72.38,192.00 L72.38,192.00 L76.35,192.00 L76.35,190.80 L80.33,190.80 L80.33,189.60 L84.30,189.60 L84.30,189.60 L88.27,189.60 L88.27,189.60 L92.25,189.60 L92.25,189.60 L96.22,189.60 L96.22,190.00 L100.19,190.00 L100.19,190.00 L104.17,190.00 L104.17,189.20 L108.14,189.20 L108.14,188.80 L112.11,188.80 L112.11,188.00 L116.09,188.00 L116.09,187.60 L120.06,187.60 L120.06,187.60 L124.03,187.60 L124.03,189.20 L128.01,189.20 L128.01,190.00 L131.98,190.00 L131.98,190.40 L135.95,190.40 L135.95,190.80 L139.93,190.80 L139.93,191.20 L143.90,191.20 L143.90,191.20 L147.88,191.20 L147.88,191.20 L151.85,191.20 L151.85,190.40 L155.82,190.40 L155.82,189.60 L159.80,189.60 L159.80,188.80 L163.77,188.80 L163.77,188.00 L167.74,188.00 L167.74,188.40 L171.72,188.40 L171.72,189.20 L175.69,189.20 L175.69,190.80 L179.66,190.80 L179.66,191.60 L183.64,191.60 L183.64,191.60 L187.61,191.60 L187.61,191.60 L191.58,191.60 L191.58,191.60 L195.56,191.60 L195.56,191.60 L199.53,191.60 L199.53,191.60 L203.50,191.60 L203.50,191.60 L207.48,191.60 L207.48,192.80 L211.45,192.80 L211.45,194.80 L215.43,194.80 L215.43,195.20 L219.40,195.20 L219.40,195.20 L223.37,195.20 L223.37,195.20 L227.35,195.20 L227.35,195.20 L231.32,195.20 L231.32,195.20 L235.29,195.20 L235.29,195.20 L239.27,195.20 L239.27,195.20 L243.24,195.20 L243.24,195.20 L247.21,195.20 L247.21,195.20 L251.19,195.20 L251.19,195.20 L255.16,195.20 L255.16,195.60 L259.13,195.60 L259.13,195.60 L263.11,195.60 L263.11,195.60 L267.08,195.60 L267.08,195.60 L271.05,195.60 L271.05,195.60 L275.03,195.60 L275.03,195.60 L279.00,195.60 L279.00,195.60 L282.97,195.60 L282.97,195.60 L286.95,195.60 L286.95,194.40 L290.92,194.40 L290.92,194.40 L294.89,194.40 L294.89,194.40 L298.87,194.40 L298.87,194.40 L302.84,194.40 L302.84,194.40 L306.82,194.40 L306.82,194.40 L310.79,194.40 L310.79,194.40 L314.76,194.40 L314.76,194.40 L318.74,194.40 L318.74,194.00 L322.71,194.00 L322.71,192.80 L326.68,192.80 L326.68,192.80 L330.66,192.80 L330.66,192.80 L334.63,192.80 L334.63,192.40 L338.60,192.40 L338.60,190.80 L342.58,190.80 L342.58,190.00 L346.55,190.00 L346.55,191.20 L350.52,191.20 L350.52,191.60 L354.50,191.60 L354.50,192.00 L358.47,192.00 L358.47,192.00 L362.44,192.00 L362.44,192.00 L366.42,192.00 L366.42,192.00 L370.39,192.00 L370.39,192.00 L374.37,192.00 L374.37,191.20 L378.34,191.20 L378.34,191.20 L382.31,191.20 L382.31,191.20 L386.29,191.20 L386.29,192.00 L390.26,192.00 L390.26,192.00 L394.23,192.00 L394.23,192.00 L398.21,192.00 L398.21,192.00 L402.18,192.00 L402.18,194.00 L406.15,194.00 L406.15,194.40 L410.13,194.40 L410.13,194.40 L414.10,194.40 L414.10,194.40 L418.07,194.40 L418.07,194.40 L422.05,194.40 L422.05,194.40 L426.02,194.40 L426.02,194.40 L429.99,194.40 L429.99,194.40 L433.97,194.40 L433.97,194.40 L437.94,194.40 L437.94,194.40 L441.91,194.40 L441.91,194.40 L445.89,194.40 L445.89,194.40 L449.86,194.40 L449.86,195.20 L453.83,195.20 L453.83,195.20 L457.81,195.20 L457.81,195.20 L461.78,195.20 L461.78,195.20 L465.76,195.20 L465.76,195.20 L469.73,195.20 L469.73,194.40 L473.70,194.40 L473.70,194.40 L477.68,194.40 L477.68,194.40 L481.65,194.40 L481.65,194.40 L485.62,194.40 L485.62,194.40 L489.60,194.40 L489.60,194.40 L493.57,194.40 L493.57,194.40 L497.54,194.40 L497.54,193.60 L501.52,193.60 L501.52,192.80 L505.49,192.80 L505.49,192.00 L509.46,192.00 L509.46,190.80 L513.44,190.80 L513.44,190.40 L517.41,190.40 L517.41,190.00 L521.38,190.00 L521.38,190.00 L525.36,190.00 L525.36,190.00 L529.33,190.00 L529.33,190.00 L533.30,190.00 L533.30,190.40 L537.28,190.40 L537.28,190.40 L541.25,190.40 L541.25,190.40 L545.23,190.40 L545.23,190.40 L549.20,190.40 L549.20,190.40 L553.17,190.40 L553.17,190.40 L557.15,190.40 L557.15,190.40 L561.12,190.40 L561.12,190.40 L565.09,190.40 L565.09,191.20 L569.07,191.20 L569.07,193.20 L573.04,193.20 L573.04,193.60 L577.01,193.60 L577.01,193.60 L580.99,193.60 L580.99,193.60 L584.96,193.60 L584.96,193.60 L588.93,193.60 L588.93,193.60 L592.91,193.60 L592.91,193.60 L596.88,193.60 L596.88,194.40 L600.85,194.40 L600.85,194.40 L604.83,194.40 L604.83,194.80 L608.80,194.80 L608.80,194.80 L612.77,194.80 L612.77,194.80 L616.75,194.80 L616.75,194.80 L620.72,194.80 L620.72,195.20 L624.70,195.20 L624.70,195.20 L628.67,195.20 L628.67,195.20 L632.64,195.20 L632.64,195.20 L636.62,195.20 L636.62,195.20 L640.59,195.20 L640.59,195.20 L644.56,195.20 L644.56,195.20 L648.54,195.20 L648.54,195.20 L652.51,195.20 L652.51,195.20 L656.48,195.20 L656.48,195.20 L660.46,195.20 L660.46,195.20 L664.43,195.20 L664.43,195.20 L668.40,195.20 L668.40,195.20 L672.38,195.20 L672.38,195.20 L676.35,195.20 L676.35,195.20 L680.32,195.20 L680.32,195.20 L684.30,195.20 L684.30,195.20 L688.27,195.20 L688.27,195.20 L692.25,195.20 L692.25,195.20 L696.22,195.20 L696.22,195.20 L700.19,195.20 L700.19,194.40 L704.17,194.40 L704.17,194.80 L708.14,194.80 L708.14,195.20 L712.11,195.20 L712.11,195.20 L716.09,195.20 L716.09,195.20 L720.06,195.20 L720.06,195.20 L724.03,195.20 L724.03,195.20 L728.01,195.20 L728.01,195.20 L731.98,195.20 L731.98,194.40 L735.95,194.40 L735.95,194.00 L739.93,194.00 L739.93,194.00 L743.90,194.00 L743.90,194.00 L747.87,194.00 L747.87,194.80 L751.85,194.80 L751.85,195.20 L755.82,195.20 L755.82,195.20 L759.79,195.20 L759.79,195.20 L763.77,195.20 L763.77,195.20 L767.74,195.20 L767.74,195.20 L771.72,195.20 L771.72,195.20 L775.69,195.20 L775.69,195.20 L779.66,195.20 L779.66,195.20 L783.64,195.20 L783.64,195.20 L787.61,195.20 L787.61,195.20 L791.58,195.20 L791.58,195.20 L795.56,195.20 L795.56,195.60 L799.53,195.60 L799.53,195.60 L803.50,195.60 L803.50,195.60 L807.48,195.60 L807.48,195.60 L811.45,195.60 L811.45,195.60 L815.42,195.60 L815.42,195.60 L819.40,195.60 L819.40,195.20 L823.37,195.20 L823.37,194.40 L827.34,194.40 L827.34,194.40 L831.32,194.40 L831.32,194.40 L835.29,194.40 L835.29,194.40 L839.26,194.40 L839.26,194.40 L843.24,194.40 L843.24,194.40 L847.21,194.40 L847.21,193.60 L851.19,193.60 L851.19,193.60 L855.16,193.60 L855.16,193.60 L859.13,193.60 L859.13,193.60 L863.11,193.60 L863.11,193.60 L867.08,193.60 L867.08,192.80 L871.05,192.80 L871.05,192.80 L875.03,192.80 L875.03,192.80 L879.00,192.80 L879.00,192.80 L882.97,192.80 L882.97,192.40 L886.95,192.40 L886.95,193.20 L890.92,193.20 L890.92,193.20 L894.89,193.20 L894.89,193.20 L898.87,193.20 L898.87,193.20 L902.84,193.20 L902.84,193.60 L906.81,193.60 L906.81,194.40 L910.79,194.40 L910.79,194.40 L914.76,194.40 L914.76,194.40 L918.73,194.40 L918.73,194.40 L922.71,194.40 L922.71,194.40 L926.68,194.40 L926.68,194.40 L930.65,194.40 L930.65,195.60 L934.63,195.60 L934.63,195.60 L938.60,195.60 L938.60,195.60 L942.58,195.60 L942.58,195.60 L946.55,195.60 L946.55,195.60 L950.52,195.60 L950.52,196.00 L954.50,196.00 L954.50,195.60 L958.47,195.60 L958.47,195.60 L962.44,195.60 L962.44,195.20 L966.42,195.20 L966.42,195.20 L970.00,195.20" stroke="#a83a3a" stroke-width="0.75" fill="none" stroke-linejoin="round"/>
<rect x="47.64" y="199.0" width="5.77" height="258.0" fill="#fff" opacity="0.7"/><rect x="103.27" y="199.0" width="5.77" height="258.0" fill="#fff" opacity="0.7"/><rect x="127.11" y="199.0" width="5.77" height="258.0" fill="#fff" opacity="0.7"/><rect x="150.95" y="199.0" width="5.77" height="258.0" fill="#fff" opacity="0.7"/><rect x="158.90" y="199.0" width="5.77" height="258.0" fill="#fff" opacity="0.7"/><rect x="190.68" y="199.0" width="5.77" height="258.0" fill="#fff" opacity="0.7"/><rect x="198.63" y="199.0" width="5.77" height="258.0" fill="#fff" opacity="0.7"/><rect x="230.42" y="199.0" width="5.77" height="258.0" fill="#fff" opacity="0.7"/><rect x="278.10" y="199.0" width="5.77" height="258.0" fill="#fff" opacity="0.7"/><rect x="294.00" y="199.0" width="5.77" height="258.0" fill="#fff" opacity="0.7"/><rect x="357.57" y="199.0" width="5.77" height="258.0" fill="#fff" opacity="0.7"/><rect x="373.47" y="199.0" width="5.77" height="258.0" fill="#fff" opacity="0.7"/><rect x="381.41" y="199.0" width="5.77" height="258.0" fill="#fff" opacity="0.7"/><rect x="516.51" y="199.0" width="5.77" height="258.0" fill="#fff" opacity="0.7"/><rect x="592.01" y="199.0" width="5.77" height="258.0" fill="#fff" opacity="0.7"/><rect x="762.87" y="199.0" width="5.77" height="258.0" fill="#fff" opacity="0.7"/><rect x="838.36" y="199.0" width="5.77" height="258.0" fill="#fff" opacity="0.7"/><rect x="858.23" y="199.0" width="5.77" height="258.0" fill="#fff" opacity="0.7"/><rect x="874.13" y="199.0" width="5.77" height="258.0" fill="#fff" opacity="0.7"/><rect x="890.02" y="199.0" width="5.77" height="258.0" fill="#fff" opacity="0.7"/>
<path d="M16.75,403.19 L20.72,403.19 L20.72,428.79 L24.70,428.79 L24.70,419.61 L28.67,419.61 L28.67,391.60 L32.64,391.60 L32.64,422.83 L36.62,422.83 L36.62,427.34 L40.59,427.34 L40.59,425.57 L44.56,425.57 L44.56,426.37 L48.54,426.37 L48.54,426.37 L50.52,426.37 L50.52,424.92 L52.51,424.92 L52.51,424.92 L56.48,424.92 L56.48,426.53 L60.46,426.53 L60.46,255.87 L64.43,255.87 L64.43,425.89 L68.41,425.89 L68.41,425.24 L72.38,425.24 L72.38,401.25 L76.35,401.25 L76.35,242.83 L80.33,242.83 L80.33,425.89 L84.30,425.89 L84.30,428.79 L88.27,428.79 L88.27,427.50 L92.25,427.50 L92.25,423.63 L96.22,423.63 L96.22,425.57 L100.19,425.57 L100.19,424.92 L104.17,424.92 L104.17,424.92 L106.15,424.92 L106.15,424.12 L108.14,424.12 L108.14,424.12 L112.11,424.12 L112.11,302.24 L116.09,302.24 L116.09,428.46 L120.06,428.46 L120.06,424.28 L124.03,424.28 L124.03,425.89 L128.01,425.89 L128.01,425.89 L129.99,425.89 L129.99,427.34 L131.98,427.34 L131.98,427.34 L135.95,427.34 L135.95,401.58 L139.93,401.58 L139.93,414.30 L143.90,414.30 L143.90,281.31 L147.88,281.31 L147.88,416.23 L151.85,416.23 L151.85,416.23 L153.84,416.23 L153.84,337.02 L155.82,337.02 L155.82,337.02 L159.80,337.02 L159.80,337.02 L161.78,337.02 L161.78,425.24 L163.77,425.24 L163.77,425.24 L167.74,425.24 L167.74,424.28 L171.72,424.28 L171.72,425.73 L175.69,425.73 L175.69,424.92 L179.66,424.92 L179.66,428.46 L183.64,428.46 L183.64,389.82 L187.61,389.82 L187.61,423.31 L191.58,423.31 L191.58,423.31 L193.57,423.31 L193.57,379.52 L195.56,379.52 L195.56,379.52 L199.53,379.52 L199.53,379.52 L201.52,379.52 L201.52,422.67 L203.50,422.67 L203.50,422.67 L207.48,422.67 L207.48,425.57 L211.45,425.57 L211.45,423.63 L215.43,423.63 L215.43,427.18 L219.40,427.18 L219.40,407.86 L223.37,407.86 L223.37,425.89 L227.35,425.89 L227.35,424.12 L231.32,424.12 L231.32,424.12 L233.31,424.12 L233.31,425.57 L235.29,425.57 L235.29,425.57 L239.27,425.57 L239.27,429.11 L243.24,429.11 L243.24,424.76 L247.21,424.76 L247.21,426.37 L251.19,426.37 L251.19,420.41 L255.16,420.41 L255.16,427.50 L259.13,427.50 L259.13,427.50 L263.11,427.50 L263.11,420.74 L267.08,420.74 L267.08,424.28 L271.05,424.28 L271.05,422.83 L275.03,422.83 L275.03,424.92 L279.00,424.92 L279.00,424.92 L280.99,424.92 L280.99,381.45 L282.97,381.45 L282.97,381.45 L286.95,381.45 L286.95,424.12 L290.92,424.12 L290.92,369.22 L294.89,369.22 L294.89,369.22 L296.88,369.22 L296.88,428.30 L298.87,428.30 L298.87,428.30 L302.84,428.30 L302.84,420.74 L306.82,420.74 L306.82,430.40 L310.79,430.40 L310.79,425.89 L314.76,425.89 L314.76,423.47 L318.74,423.47 L318.74,354.89 L322.71,354.89 L322.71,424.76 L326.68,424.76 L326.68,427.18 L330.66,427.18 L330.66,423.63 L334.63,423.63 L334.63,425.24 L338.60,425.24 L338.60,269.56 L342.58,269.56 L342.58,427.18 L346.55,427.18 L346.55,421.22 L350.52,421.22 L350.52,424.92 L354.50,424.92 L354.50,424.12 L358.47,424.12 L358.47,424.12 L360.46,424.12 L360.46,420.09 L362.44,420.09 L362.44,420.09 L366.42,420.09 L366.42,424.92 L370.39,424.92 L370.39,424.28 L374.37,424.28 L374.37,424.28 L376.35,424.28 L376.35,425.24 L378.34,425.24 L378.34,425.24 L382.31,425.24 L382.31,425.24 L384.30,425.24 L384.30,375.98 L386.29,375.98 L386.29,375.98 L390.26,375.98 L390.26,421.22 L394.23,421.22 L394.23,424.28 L398.21,424.28 L398.21,425.89 L402.18,425.89 L402.18,389.82 L406.15,389.82 L406.15,417.84 L410.13,417.84 L410.13,430.40 L414.10,430.40 L414.10,425.24 L418.07,425.24 L418.07,427.50 L422.05,427.50 L422.05,428.14 L426.02,428.14 L426.02,426.37 L429.99,426.37 L429.99,421.22 L433.97,421.22 L433.97,425.24 L437.94,425.24 L437.94,416.23 L441.91,416.23 L441.91,416.87 L445.89,416.87 L445.89,419.93 L449.86,419.93 L449.86,424.12 L453.83,424.12 L453.83,426.53 L457.81,426.53 L457.81,425.24 L461.78,425.24 L461.78,393.85 L465.76,393.85 L465.76,350.54 L469.73,350.54 L469.73,429.27 L473.70,429.27 L473.70,397.39 L477.68,397.39 L477.68,428.30 L481.65,428.30 L481.65,403.19 L485.62,403.19 L485.62,425.24 L489.60,425.24 L489.60,419.61 L493.57,419.61 L493.57,427.98 L497.54,427.98 L497.54,406.57 L501.52,406.57 L501.52,422.35 L505.49,422.35 L505.49,230.27 L509.46,230.27 L509.46,423.31 L513.44,423.31 L513.44,424.44 L517.41,424.44 L517.41,424.44 L519.40,424.44 L519.40,425.73 L521.38,425.73 L521.38,425.73 L525.36,425.73 L525.36,419.45 L529.33,419.45 L529.33,423.15 L533.30,423.15 L533.30,341.20 L537.28,341.20 L537.28,423.47 L541.25,423.47 L541.25,428.30 L545.23,428.30 L545.23,428.30 L549.20,428.30 L549.20,427.18 L553.17,427.18 L553.17,413.01 L557.15,413.01 L557.15,405.76 L561.12,405.76 L561.12,422.51 L565.09,422.51 L565.09,431.20 L569.07,431.20 L569.07,424.44 L573.04,424.44 L573.04,409.47 L577.01,409.47 L577.01,417.19 L580.99,417.19 L580.99,396.59 L584.96,396.59 L584.96,424.92 L588.93,424.92 L588.93,430.72 L592.91,430.72 L592.91,430.72 L594.89,430.72 L594.89,426.37 L596.88,426.37 L596.88,426.37 L600.85,426.37 L600.85,401.42 L604.83,401.42 L604.83,423.15 L608.80,423.15 L608.80,413.81 L612.77,413.81 L612.77,409.47 L616.75,409.47 L616.75,429.75 L620.72,429.75 L620.72,392.24 L624.70,392.24 L624.70,412.04 L628.67,412.04 L628.67,428.79 L632.64,428.79 L632.64,413.33 L636.62,413.33 L636.62,428.14 L640.59,428.14 L640.59,430.07 L644.56,430.07 L644.56,412.69 L648.54,412.69 L648.54,435.39 L652.51,435.39 L652.51,425.57 L656.48,425.57 L656.48,433.94 L660.46,433.94 L660.46,420.74 L664.43,420.74 L664.43,420.09 L668.40,420.09 L668.40,419.29 L672.38,419.29 L672.38,424.44 L676.35,424.44 L676.35,431.52 L680.32,431.52 L680.32,397.71 L684.30,397.71 L684.30,427.50 L688.27,427.50 L688.27,419.45 L692.25,419.45 L692.25,420.09 L696.22,420.09 L696.22,386.28 L700.19,386.28 L700.19,415.42 L704.17,415.42 L704.17,397.71 L708.14,397.71 L708.14,402.38 L712.11,402.38 L712.11,409.47 L716.09,409.47 L716.09,425.57 L720.06,425.57 L720.06,424.12 L724.03,424.12 L724.03,427.50 L728.01,427.50 L728.01,425.89 L731.98,425.89 L731.98,366.64 L735.95,366.64 L735.95,416.23 L739.93,416.23 L739.93,426.85 L743.90,426.85 L743.90,422.51 L747.87,422.51 L747.87,435.06 L751.85,435.06 L751.85,424.28 L755.82,424.28 L755.82,399.16 L759.79,399.16 L759.79,402.22 L763.77,402.22 L763.77,402.22 L765.75,402.22 L765.75,411.24 L767.74,411.24 L767.74,411.24 L771.72,411.24 L771.72,389.50 L775.69,389.50 L775.69,394.65 L779.66,394.65 L779.66,402.38 L783.64,402.38 L783.64,409.79 L787.61,409.79 L787.61,389.50 L791.58,389.50 L791.58,391.43 L795.56,391.43 L795.56,403.35 L799.53,403.35 L799.53,383.71 L803.50,383.71 L803.50,400.13 L807.48,400.13 L807.48,412.20 L811.45,412.20 L811.45,419.61 L815.42,419.61 L815.42,407.21 L819.40,407.21 L819.40,428.46 L823.37,428.46 L823.37,385.15 L827.34,385.15 L827.34,426.37 L831.32,426.37 L831.32,400.77 L835.29,400.77 L835.29,419.45 L839.26,419.45 L839.26,419.45 L841.25,419.45 L841.25,424.44 L843.24,424.44 L843.24,424.44 L847.21,424.44 L847.21,393.53 L851.19,393.53 L851.19,428.79 L855.16,428.79 L855.16,426.53 L859.13,426.53 L859.13,426.53 L861.12,426.53 L861.12,395.14 L863.11,395.14 L863.11,395.14 L867.08,395.14 L867.08,427.98 L871.05,427.98 L871.05,426.53 L875.03,426.53 L875.03,426.53 L877.01,426.53 L877.01,424.76 L879.00,424.76 L879.00,424.76 L882.97,424.76 L882.97,384.19 L886.95,384.19 L886.95,421.22 L890.92,421.22 L890.92,421.22 L892.91,421.22 L892.91,427.18 L894.89,427.18 L894.89,427.18 L898.87,427.18 L898.87,428.14 L902.84,428.14 L902.84,425.57 L906.81,425.57 L906.81,425.57 L910.79,425.57 L910.79,425.57 L914.76,425.57 L914.76,426.05 L918.73,426.05 L918.73,423.15 L922.71,423.15 L922.71,424.28 L926.68,424.28 L926.68,409.31 L930.65,409.31 L930.65,418.48 L934.63,418.48 L934.63,419.29 L938.60,419.29 L938.60,425.57 L942.58,425.57 L942.58,408.82 L946.55,408.82 L946.55,424.92 L950.52,424.92 L950.52,429.11 L954.50,429.11 L954.50,390.79 L958.47,390.79 L958.47,416.71 L962.44,416.71 L962.44,389.50 L966.42,389.50 L966.42,424.44 L970.39,424.44" stroke="#fff" stroke-width="2.0" fill="none" stroke-linejoin="miter" opacity="0.7"/>
<path d="M20.50,403.19V428.79M24.50,428.79V419.61M28.50,419.61V391.60M32.50,391.60V422.83M36.50,422.83V427.34M40.50,427.34V425.57M44.50,425.57V426.37M50.50,426.37V424.92M56.50,424.92V426.53M60.50,426.53V255.87M64.50,255.87V425.89M68.50,425.89V425.24M72.50,425.24V401.25M76.50,401.25V242.83M80.50,242.83V425.89M84.50,425.89V428.79M88.50,428.79V427.50M92.50,427.50V423.63M96.50,423.63V425.57M100.50,425.57V424.92M106.50,424.92V424.12M112.50,424.12V302.24M116.50,302.24V428.46M120.50,428.46V424.28M124.50,424.28V425.89M129.50,425.89V427.34M135.50,427.34V401.58M139.50,401.58V414.30M143.50,414.30V281.31M147.50,281.31V416.23M153.50,416.23V337.02M161.50,337.02V425.24M167.50,425.24V424.28M171.50,424.28V425.73M175.50,425.73V424.92M179.50,424.92V428.46M183.50,428.46V389.82M187.50,389.82V423.31M193.50,423.31V379.52M201.50,379.52V422.67M207.50,422.67V425.57M211.50,425.57V423.63M215.50,423.63V427.18M219.50,427.18V407.86M223.50,407.86V425.89M227.50,425.89V424.12M233.50,424.12V425.57M239.50,425.57V429.11M243.50,429.11V424.76M247.50,424.76V426.37M251.50,426.37V420.41M255.50,420.41V427.50M263.50,427.50V420.74M267.50,420.74V424.28M271.50,424.28V422.83M275.50,422.83V424.92M280.50,424.92V381.45M286.50,381.45V424.12M290.50,424.12V369.22M296.50,369.22V428.30M302.50,428.30V420.74M306.50,420.74V430.40M310.50,430.40V425.89M314.50,425.89V423.47M318.50,423.47V354.89M322.50,354.89V424.76M326.50,424.76V427.18M330.50,427.18V423.63M334.50,423.63V425.24M338.50,425.24V269.56M342.50,269.56V427.18M346.50,427.18V421.22M350.50,421.22V424.92M354.50,424.92V424.12M360.50,424.12V420.09M366.50,420.09V424.92M370.50,424.92V424.28M376.50,424.28V425.24M384.50,425.24V375.98M390.50,375.98V421.22M394.50,421.22V424.28M398.50,424.28V425.89M402.50,425.89V389.82M406.50,389.82V417.84M410.50,417.84V430.40M414.50,430.40V425.24M418.50,425.24V427.50M422.50,427.50V428.14M426.50,428.14V426.37M429.50,426.37V421.22M433.50,421.22V425.24M437.50,425.24V416.23M441.50,416.23V416.87M445.50,416.87V419.93M449.50,419.93V424.12M453.50,424.12V426.53M457.50,426.53V425.24M461.50,425.24V393.85M465.50,393.85V350.54M469.50,350.54V429.27M473.50,429.27V397.39M477.50,397.39V428.30M481.50,428.30V403.19M485.50,403.19V425.24M489.50,425.24V419.61M493.50,419.61V427.98M497.50,427.98V406.57M501.50,406.57V422.35M505.50,422.35V230.27M509.50,230.27V423.31M513.50,423.31V424.44M519.50,424.44V425.73M525.50,425.73V419.45M529.50,419.45V423.15M533.50,423.15V341.20M537.50,341.20V423.47M541.50,423.47V428.30M549.50,428.30V427.18M553.50,427.18V413.01M557.50,413.01V405.76M561.50,405.76V422.51M565.50,422.51V431.20M569.50,431.20V424.44M573.50,424.44V409.47M577.50,409.47V417.19M580.50,417.19V396.59M584.50,396.59V424.92M588.50,424.92V430.72M594.50,430.72V426.37M600.50,426.37V401.42M604.50,401.42V423.15M608.50,423.15V413.81M612.50,413.81V409.47M616.50,409.47V429.75M620.50,429.75V392.24M624.50,392.24V412.04M628.50,412.04V428.79M632.50,428.79V413.33M636.50,413.33V428.14M640.50,428.14V430.07M644.50,430.07V412.69M648.50,412.69V435.39M652.50,435.39V425.57M656.50,425.57V433.94M660.50,433.94V420.74M664.50,420.74V420.09M668.50,420.09V419.29M672.50,419.29V424.44M676.50,424.44V431.52M680.50,431.52V397.71M684.50,397.71V427.50M688.50,427.50V419.45M692.50,419.45V420.09M696.50,420.09V386.28M700.50,386.28V415.42M704.50,415.42V397.71M708.50,397.71V402.38M712.50,402.38V409.47M716.50,409.47V425.57M720.50,425.57V424.12M724.50,424.12V427.50M728.50,427.50V425.89M731.50,425.89V366.64M735.50,366.64V416.23M739.50,416.23V426.85M743.50,426.85V422.51M747.50,422.51V435.06M751.50,435.06V424.28M755.50,424.28V399.16M759.50,399.16V402.22M765.50,402.22V411.24M771.50,411.24V389.50M775.50,389.50V394.65M779.50,394.65V402.38M783.50,402.38V409.79M787.50,409.79V389.50M791.50,389.50V391.43M795.50,391.43V403.35M799.50,403.35V383.71M803.50,383.71V400.13M807.50,400.13V412.20M811.50,412.20V419.61M815.50,419.61V407.21M819.50,407.21V428.46M823.50,428.46V385.15M827.50,385.15V426.37M831.50,426.37V400.77M835.50,400.77V419.45M841.50,419.45V424.44M847.50,424.44V393.53M851.50,393.53V428.79M855.50,428.79V426.53M861.50,426.53V395.14M867.50,395.14V427.98M871.50,427.98V426.53M877.50,426.53V424.76M882.50,424.76V384.19M886.50,384.19V421.22M892.50,421.22V427.18M898.50,427.18V428.14M902.50,428.14V425.57M914.50,425.57V426.05M918.50,426.05V423.15M922.50,423.15V424.28M926.50,424.28V409.31M930.50,409.31V418.48M934.50,418.48V419.29M938.50,419.29V425.57M942.50,425.57V408.82M946.50,408.82V424.92M950.50,424.92V429.11M954.50,429.11V390.79M958.50,390.79V416.71M962.50,416.71V389.50M966.50,389.50V424.44" stroke="#2c332c" stroke-width="0.7" fill="none"/>
<path d="M16.45,403.19H21.02M20.42,428.79H25.00M24.40,419.61H28.97M28.37,391.60H32.94M32.34,422.83H36.92M36.32,427.34H40.89M40.29,425.57H44.86M44.26,426.37H48.84M48.24,426.37H50.82M50.22,424.92H52.81M52.21,424.92H56.78M56.19,426.53H60.76M60.16,255.87H64.73M64.13,425.89H68.71M68.11,425.24H72.68M72.08,401.25H76.65M76.05,242.83H80.63M80.03,425.89H84.60M84.00,428.79H88.57M87.97,427.50H92.55M91.95,423.63H96.52M95.92,425.57H100.49M99.89,424.92H104.47M103.87,424.92H106.45M105.85,424.12H108.44M107.84,424.12H112.41M111.81,302.24H116.39M115.79,428.46H120.36M119.76,424.28H124.33M123.73,425.89H128.31M127.71,425.89H130.29M129.69,427.34H132.28M131.68,427.34H136.25M135.65,401.58H140.23M139.63,414.30H144.20M143.60,281.31H148.18M147.58,416.23H152.15M151.55,416.23H154.14M153.54,337.02H156.12M155.52,337.02H160.10M159.50,337.02H162.08M161.48,425.24H164.07M163.47,425.24H168.04M167.44,424.28H172.02M171.42,425.73H175.99M175.39,424.92H179.96M179.36,428.46H183.94M183.34,389.82H187.91M187.31,423.31H191.88M191.28,423.31H193.87M193.27,379.52H195.86M195.26,379.52H199.83M199.23,379.52H201.82M201.22,422.67H203.80M203.20,422.67H207.78M207.18,425.57H211.75M211.15,423.63H215.73M215.12,427.18H219.70M219.10,407.86H223.67M223.07,425.89H227.65M227.05,424.12H231.62M231.02,424.12H233.61M233.01,425.57H235.59M234.99,425.57H239.57M238.97,429.11H243.54M242.94,424.76H247.51M246.91,426.37H251.49M250.89,420.41H255.46M254.86,427.50H259.43M258.83,427.50H263.41M262.81,420.74H267.38M266.78,424.28H271.35M270.75,422.83H275.33M274.73,424.92H279.30M278.70,424.92H281.29M280.69,381.45H283.27M282.67,381.45H287.25M286.65,424.12H291.22M290.62,369.22H295.19M294.59,369.22H297.18M296.58,428.30H299.17M298.57,428.30H303.14M302.54,420.74H307.12M306.52,430.40H311.09M310.49,425.89H315.06M314.46,423.47H319.04M318.44,354.89H323.01M322.41,424.76H326.98M326.38,427.18H330.96M330.36,423.63H334.93M334.33,425.24H338.90M338.30,269.56H342.88M342.28,427.18H346.85M346.25,421.22H350.82M350.22,424.92H354.80M354.20,424.12H358.77M358.17,424.12H360.76M360.16,420.09H362.74M362.14,420.09H366.72M366.12,424.92H370.69M370.09,424.28H374.67M374.06,424.28H376.65M376.05,425.24H378.64M378.04,425.24H382.61M382.01,425.24H384.60M384.00,375.98H386.59M385.99,375.98H390.56M389.96,421.22H394.53M393.93,424.28H398.51M397.91,425.89H402.48M401.88,389.82H406.45M405.85,417.84H410.43M409.83,430.40H414.40M413.80,425.24H418.37M417.77,427.50H422.35M421.75,428.14H426.32M425.72,426.37H430.29M429.69,421.22H434.27M433.67,425.24H438.24M437.64,416.23H442.21M441.61,416.87H446.19M445.59,419.93H450.16M449.56,424.12H454.13M453.53,426.53H458.11M457.51,425.24H462.08M461.48,393.85H466.06M465.46,350.54H470.03M469.43,429.27H474.00M473.40,397.39H477.98M477.38,428.30H481.95M481.35,403.19H485.92M485.32,425.24H489.90M489.30,419.61H493.87M493.27,427.98H497.84M497.24,406.57H501.82M501.22,422.35H505.79M505.19,230.27H509.76M509.16,423.31H513.74M513.14,424.44H517.71M517.11,424.44H519.70M519.10,425.73H521.68M521.08,425.73H525.66M525.06,419.45H529.63M529.03,423.15H533.60M533.00,341.20H537.58M536.98,423.47H541.55M540.95,428.30H545.53M544.93,428.30H549.50M548.90,427.18H553.47M552.87,413.01H557.45M556.85,405.76H561.42M560.82,422.51H565.39M564.79,431.20H569.37M568.77,424.44H573.34M572.74,409.47H577.31M576.71,417.19H581.29M580.69,396.59H585.26M584.66,424.92H589.23M588.63,430.72H593.21M592.61,430.72H595.19M594.59,426.37H597.18M596.58,426.37H601.15M600.55,401.42H605.13M604.53,423.15H609.10M608.50,413.81H613.07M612.48,409.47H617.05M616.45,429.75H621.02M620.42,392.24H625.00M624.40,412.04H628.97M628.37,428.79H632.94M632.34,413.33H636.92M636.32,428.14H640.89M640.29,430.07H644.86M644.26,412.69H648.84M648.24,435.39H652.81M652.21,425.57H656.78M656.18,433.94H660.76M660.16,420.74H664.73M664.13,420.09H668.70M668.10,419.29H672.68M672.08,424.44H676.65M676.05,431.52H680.62M680.02,397.71H684.60M684.00,427.50H688.57M687.97,419.45H692.54M691.95,420.09H696.52M695.92,386.28H700.49M699.89,415.42H704.47M703.87,397.71H708.44M707.84,402.38H712.41M711.81,409.47H716.39M715.79,425.57H720.36M719.76,424.12H724.33M723.73,427.50H728.31M727.71,425.89H732.28M731.68,366.64H736.25M735.65,416.23H740.23M739.63,426.85H744.20M743.60,422.51H748.17M747.57,435.06H752.15M751.55,424.28H756.12M755.52,399.16H760.09M759.49,402.22H764.07M763.47,402.22H766.05M765.45,411.24H768.04M767.44,411.24H772.01M771.42,389.50H775.99M775.39,394.65H779.96M779.36,402.38H783.94M783.34,409.79H787.91M787.31,389.50H791.88M791.28,391.43H795.86M795.26,403.35H799.83M799.23,383.71H803.80M803.20,400.13H807.78M807.18,412.20H811.75M811.15,419.61H815.72M815.12,407.21H819.70M819.10,428.46H823.67M823.07,385.15H827.64M827.04,426.37H831.62M831.02,400.77H835.59M834.99,419.45H839.56M838.96,419.45H841.55M840.95,424.44H843.54M842.94,424.44H847.51M846.91,393.53H851.49M850.89,428.79H855.46M854.86,426.53H859.43M858.83,426.53H861.42M860.82,395.14H863.41M862.81,395.14H867.38M866.78,427.98H871.35M870.75,426.53H875.33M874.73,426.53H877.31M876.71,424.76H879.30M878.70,424.76H883.27M882.67,384.19H887.25M886.65,421.22H891.22M890.62,421.22H893.21M892.61,427.18H895.19M894.59,427.18H899.17M898.57,428.14H903.14M902.54,425.57H907.11M906.51,425.57H911.09M910.49,425.57H915.06M914.46,426.05H919.03M918.43,423.15H923.01M922.41,424.28H926.98M926.38,409.31H930.95M930.36,418.48H934.93M934.33,419.29H938.90M938.30,425.57H942.88M942.28,408.82H946.85M946.25,424.92H950.82M950.22,429.11H954.80M954.20,390.79H958.77M958.17,416.71H962.74M962.14,389.50H966.72M966.12,424.44H970.69" stroke="#0c0c0c" stroke-width="0.8" fill="none"/>
<rect x="48.44" y="199.0" width="4.17" height="258.0" fill="#ff0000"/><rect x="104.07" y="199.0" width="4.17" height="258.0" fill="#ff0000"/><rect x="127.91" y="199.0" width="4.17" height="258.0" fill="#ff0000"/><rect x="151.75" y="199.0" width="4.17" height="258.0" fill="#ff0000"/><rect x="159.70" y="199.0" width="4.17" height="258.0" fill="#ff0000"/><rect x="191.48" y="199.0" width="4.17" height="258.0" fill="#ff0000"/><rect x="199.43" y="199.0" width="4.17" height="258.0" fill="#ff0000"/><rect x="231.22" y="199.0" width="4.17" height="258.0" fill="#ff0000"/><rect x="278.90" y="199.0" width="4.17" height="258.0" fill="#ff0000"/><rect x="294.79" y="199.0" width="4.17" height="258.0" fill="#ff0000"/><rect x="358.37" y="199.0" width="4.17" height="258.0" fill="#ff0000"/><rect x="374.26" y="199.0" width="4.17" height="258.0" fill="#ff0000"/><rect x="382.21" y="199.0" width="4.17" height="258.0" fill="#ff0000"/><rect x="517.31" y="199.0" width="4.17" height="258.0" fill="#ff0000"/><rect x="592.81" y="199.0" width="4.17" height="258.0" fill="#ff0000"/><rect x="763.67" y="199.0" width="4.17" height="258.0" fill="#ff0000"/><rect x="839.16" y="199.0" width="4.17" height="258.0" fill="#ff0000"/><rect x="859.03" y="199.0" width="4.17" height="258.0" fill="#ff0000"/><rect x="874.93" y="199.0" width="4.17" height="258.0" fill="#ff0000"/><rect x="890.82" y="199.0" width="4.17" height="258.0" fill="#ff0000"/>
<rect x="16.0" y="199.0" width="0.8" height="258.6" fill="#7c7c7c"/>
<rect x="16.2" y="456.9" width="953.8" height="0.7" fill="#6c726c"/>
<rect x="30.20" y="457.3" width="0.6" height="1.6" fill="#444"/><rect x="77.90" y="457.3" width="0.6" height="1.6" fill="#444"/><rect x="125.60" y="457.3" width="0.6" height="1.6" fill="#444"/><rect x="173.30" y="457.3" width="0.6" height="1.6" fill="#444"/><rect x="221.00" y="457.3" width="0.6" height="1.6" fill="#444"/><rect x="268.70" y="457.3" width="0.6" height="1.6" fill="#444"/><rect x="316.40" y="457.3" width="0.6" height="1.6" fill="#444"/><rect x="364.10" y="457.3" width="0.6" height="1.6" fill="#444"/><rect x="411.80" y="457.3" width="0.6" height="1.6" fill="#444"/><rect x="459.50" y="457.3" width="0.6" height="1.6" fill="#444"/><rect x="507.20" y="457.3" width="0.6" height="1.6" fill="#444"/><rect x="554.90" y="457.3" width="0.6" height="1.6" fill="#444"/><rect x="602.60" y="457.3" width="0.6" height="1.6" fill="#444"/><rect x="650.30" y="457.3" width="0.6" height="1.6" fill="#444"/><rect x="698.00" y="457.3" width="0.6" height="1.6" fill="#444"/><rect x="745.70" y="457.3" width="0.6" height="1.6" fill="#444"/><rect x="793.40" y="457.3" width="0.6" height="1.6" fill="#444"/><rect x="841.10" y="457.3" width="0.6" height="1.6" fill="#444"/><rect x="888.80" y="457.3" width="0.6" height="1.6" fill="#444"/><rect x="936.50" y="457.3" width="0.6" height="1.6" fill="#444"/>
<rect x="19" y="475.2" width="943" height="0.8" fill="#9c9c9c"/>
<circle cx="965" cy="475.6" r="4.1" fill="#f4f4f4" stroke="#dcdcdc" stroke-width="0.5"/>
</svg>
<div style="top:182px;height:10.0px;line-height:10.0px;font-size:5.512px;color:#b03030;font-style:italic;left:343.20px;width:300px;text-align:center;transform-origin:50% 50%;transform:translateY(0.45px) scaleX(0.8777);">Jitter (ms)</div>
<div style="top:455px;height:10.0px;line-height:10.0px;font-size:6.063px;color:#568a46;left:-115.70px;width:300px;text-align:center;transform-origin:50% 50%;transform:translateY(0.85px) scaleX(0.8889);">13:32:30</div><div style="top:455px;height:10.0px;line-height:10.0px;font-size:6.063px;color:#568a46;left:-68.00px;width:300px;text-align:center;transform-origin:50% 50%;transform:translateY(0.85px) scaleX(0.8889);">13:33:00</div><div style="top:455px;height:10.0px;line-height:10.0px;font-size:6.063px;color:#568a46;left:-20.30px;width:300px;text-align:center;transform-origin:50% 50%;transform:translateY(0.85px) scaleX(0.8889);">13:33:30</div><div style="top:455px;height:10.0px;line-height:10.0px;font-size:6.063px;color:#568a46;left:27.40px;width:300px;text-align:center;transform-origin:50% 50%;transform:translateY(0.85px) scaleX(0.8889);">13:34:00</div><div style="top:455px;height:10.0px;line-height:10.0px;font-size:6.063px;color:#568a46;left:75.10px;width:300px;text-align:center;transform-origin:50% 50%;transform:translateY(0.85px) scaleX(0.8889);">13:34:30</div><div style="top:455px;height:10.0px;line-height:10.0px;font-size:6.063px;color:#568a46;left:122.80px;width:300px;text-align:center;transform-origin:50% 50%;transform:translateY(0.85px) scaleX(0.8889);">13:35:00</div><div style="top:455px;height:10.0px;line-height:10.0px;font-size:6.063px;color:#568a46;left:170.50px;width:300px;text-align:center;transform-origin:50% 50%;transform:translateY(0.85px) scaleX(0.8889);">13:35:30</div><div style="top:455px;height:10.0px;line-height:10.0px;font-size:6.063px;color:#568a46;left:218.20px;width:300px;text-align:center;transform-origin:50% 50%;transform:translateY(0.85px) scaleX(0.8889);">13:36:00</div><div style="top:455px;height:10.0px;line-height:10.0px;font-size:6.063px;color:#568a46;left:265.90px;width:300px;text-align:center;transform-origin:50% 50%;transform:translateY(0.85px) scaleX(0.8889);">13:36:30</div><div style="top:455px;height:10.0px;line-height:10.0px;font-size:6.063px;color:#568a46;left:313.60px;width:300px;text-align:center;transform-origin:50% 50%;transform:translateY(0.85px) scaleX(0.8889);">13:37:00</div><div style="top:455px;height:10.0px;line-height:10.0px;font-size:6.063px;color:#568a46;left:361.30px;width:300px;text-align:center;transform-origin:50% 50%;transform:translateY(0.85px) scaleX(0.8889);">13:37:30</div><div style="top:455px;height:10.0px;line-height:10.0px;font-size:6.063px;color:#568a46;left:409.00px;width:300px;text-align:center;transform-origin:50% 50%;transform:translateY(0.85px) scaleX(0.8889);">13:38:00</div><div style="top:455px;height:10.0px;line-height:10.0px;font-size:6.063px;color:#568a46;left:456.70px;width:300px;text-align:center;transform-origin:50% 50%;transform:translateY(0.85px) scaleX(0.8889);">13:38:30</div><div style="top:455px;height:10.0px;line-height:10.0px;font-size:6.063px;color:#568a46;left:504.40px;width:300px;text-align:center;transform-origin:50% 50%;transform:translateY(0.85px) scaleX(0.8889);">13:39:00</div><div style="top:455px;height:10.0px;line-height:10.0px;font-size:6.063px;color:#568a46;left:552.10px;width:300px;text-align:center;transform-origin:50% 50%;transform:translateY(0.85px) scaleX(0.8889);">13:39:30</div><div style="top:455px;height:10.0px;line-height:10.0px;font-size:6.063px;color:#568a46;left:599.80px;width:300px;text-align:center;transform-origin:50% 50%;transform:translateY(0.85px) scaleX(0.8889);">13:40:00</div><div style="top:455px;height:10.0px;line-height:10.0px;font-size:6.063px;color:#568a46;left:647.50px;width:300px;text-align:center;transform-origin:50% 50%;transform:translateY(0.85px) scaleX(0.8889);">13:40:30</div><div style="top:455px;height:10.0px;line-height:10.0px;font-size:6.063px;color:#568a46;left:695.20px;width:300px;text-align:center;transform-origin:50% 50%;transform:translateY(0.85px) scaleX(0.8889);">13:41:00</div><div style="top:455px;height:10.0px;line-height:10.0px;font-size:6.063px;color:#568a46;left:742.90px;width:300px;text-align:center;transform-origin:50% 50%;transform:translateY(0.85px) scaleX(0.8889);">13:41:30</div><div style="top:455px;height:10.0px;line-height:10.0px;font-size:6.063px;color:#568a46;left:790.60px;width:300px;text-align:center;transform-origin:50% 50%;transform:translateY(0.85px) scaleX(0.8889);">13:42:00</div>
<div style="left:8.7px;top:343.8px;transform-origin:0 0;transform:rotate(-90deg) scaleX(.95);font-size:5.8px;line-height:8px;color:#222">Latency (ms)</div>
<div style="left:977.6px;top:314.8px;transform-origin:0 0;transform:rotate(90deg) scaleX(.93);font-size:5.6px;line-height:8px;color:#c03030">Packet Loss %</div>
</div></body></html>
